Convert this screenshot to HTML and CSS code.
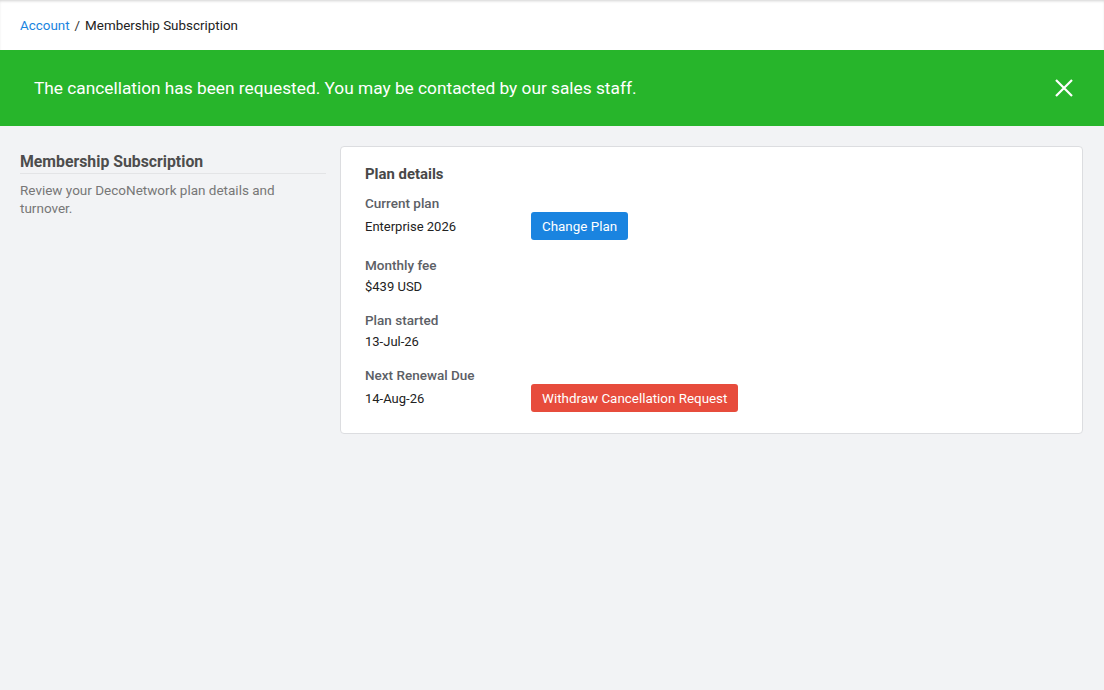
FILE: index.html
```html
<!DOCTYPE html>
<html lang="en">
<head>
    <meta charset="UTF-8">
    <meta name="viewport" content="width=device-width, initial-scale=1.0">
    <title>Membership Subscription</title>
    <link rel="stylesheet" href="styles.css">
</head>
<body>
    <div class="topbar">
        <a href="#" class="crumb-link">Account</a>
        <span class="crumb-sep">/</span>
        <span class="crumb-current">Membership Subscription</span>
    </div>

    <div class="alert">
        <span>The cancellation has been requested. You may be contacted by our sales staff.</span>
        <button class="alert-close" aria-label="Close">
            <svg width="18" height="18" viewBox="0 0 18 18">
                <path d="M1 1L17 17M17 1L1 17" stroke="#fff" stroke-width="2.2" fill="none"/>
            </svg>
        </button>
    </div>

    <div class="main">
        <div class="side">
            <h3>Membership Subscription</h3>
            <p>Review your DecoNetwork plan details and turnover.</p>
        </div>

        <div class="card">
            <h4>Plan details</h4>

            <div class="field field-btn">
                <div class="label">Current plan</div>
                <div class="row">
                    <div class="value">Enterprise 2026</div>
                    <button class="btn btn-blue">Change Plan</button>
                </div>
            </div>

            <div class="field">
                <div class="label">Monthly fee</div>
                <div class="row">
                    <div class="value">$439 USD</div>
                </div>
            </div>

            <div class="field">
                <div class="label">Plan started</div>
                <div class="row">
                    <div class="value">13-Jul-26</div>
                </div>
            </div>

            <div class="field field-btn">
                <div class="label">Next Renewal Due</div>
                <div class="row">
                    <div class="value">14-Aug-26</div>
                    <button class="btn btn-red">Withdraw Cancellation Request</button>
                </div>
            </div>
        </div>
    </div>
</body>
</html>
```

FILE: styles.css
```css
html, body {
    margin: 0;
    height: 100%;
}
body {
    font-family: Roboto, "Liberation Sans", Arial, sans-serif;
    background: #f2f3f5;
    color: #222;
}
.topbar {
    height: 50px;
    background: #fff;
    display: flex;
    align-items: center;
    padding: 0 20px;
    font-size: 13.4px;
    box-shadow: inset 0 2px 3px -1px rgba(0, 0, 0, 0.18);
}
.crumb-link {
    color: #1a84e0;
    text-decoration: none;
}
.crumb-sep {
    margin: 0 5px;
    color: #333;
}
.crumb-current {
    color: #222;
}
.alert {
    height: 76px;
    background: #27b52b;
    color: #fff;
    display: flex;
    align-items: center;
    justify-content: space-between;
    padding: 0 31px 0 34px;
    font-size: 17.3px;
}
.alert-close {
    background: none;
    border: none;
    padding: 0;
    width: 18px;
    height: 18px;
    cursor: pointer;
    display: flex;
}
.main {
    display: flex;
    align-items: flex-start;
    padding: 20px 21px 20px 20px;
    gap: 14px;
}
.side {
    width: 306px;
}
.side h3 {
    margin: 0;
    font-size: 15.8px;
    font-weight: bold;
    color: #4d4d4d;
    line-height: 20px;
    padding: 6px 0 1px;
    border-bottom: 1px solid #e3e4e6;
}
.side p {
    margin: 7px 0 0;
    font-size: 13.5px;
    line-height: 18px;
    color: #777;
    padding-right: 20px;
}
.card {
    flex: 1;
    background: #fff;
    border: 1px solid #dcdde0;
    border-radius: 4px;
    padding: 17px 24px 21px;
}
.card h4 {
    margin: 0 0 10px;
    font-size: 14.9px;
    font-weight: bold;
    color: #484848;
    line-height: 20px;
}
.field {
    margin-bottom: 13px;
}
.field-btn {
    margin-bottom: 16px;
}
.field:last-child {
    margin-bottom: 0;
}
.label {
    font-size: 13.5px;
    font-weight: 500;
    color: #5c6066;
    line-height: 18px;
}
.row {
    display: flex;
    align-items: center;
    min-height: 24px;
}
.value {
    width: 166px;
    font-size: 13px;
    color: #222;
}
.btn {
    font-family: Roboto, "Liberation Sans", Arial, sans-serif;
    font-size: 13.4px;
    color: #fff;
    border: none;
    border-radius: 3px;
    height: 28px;
    padding: 0 11px;
    cursor: pointer;
}
.btn-blue {
    background: #1a84e0;
}
.btn-red {
    background: #e74c3c;
}
```
